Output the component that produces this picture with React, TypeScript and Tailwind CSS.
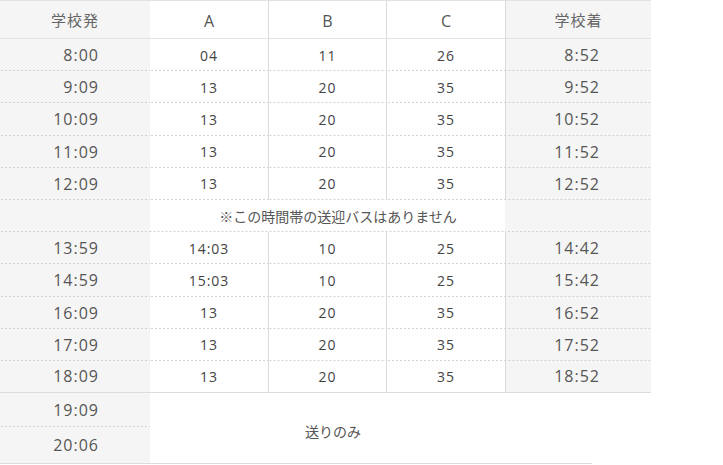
import React from "react";

const font = { fontFamily: '"Open Sans", "Noto Sans CJK JP", sans-serif' };

type Row = { dep: string; a: string; b: string; c: string; arr: string };

const first: Row[] = [
  { dep: "8:00", a: "04", b: "11", c: "26", arr: "8:52" },
  { dep: "9:09", a: "13", b: "20", c: "35", arr: "9:52" },
  { dep: "10:09", a: "13", b: "20", c: "35", arr: "10:52" },
  { dep: "11:09", a: "13", b: "20", c: "35", arr: "11:52" },
  { dep: "12:09", a: "13", b: "20", c: "35", arr: "12:52" },
];

const second: Row[] = [
  { dep: "13:59", a: "14:03", b: "10", c: "25", arr: "14:42" },
  { dep: "14:59", a: "15:03", b: "10", c: "25", arr: "15:42" },
  { dep: "16:09", a: "13", b: "20", c: "35", arr: "16:52" },
  { dep: "17:09", a: "13", b: "20", c: "35", arr: "17:52" },
  { dep: "18:09", a: "13", b: "20", c: "35", arr: "18:52" },
];

const dash =
  "bg-[linear-gradient(to_right,#d2d2d2_50%,transparent_50%)] bg-[length:4px_1px] bg-repeat-x bg-bottom";

function DataRow({ r, last }: { r: Row; last?: boolean }) {
  const bb = last ? "border-b border-solid border-b-[#dcdcdc]" : dash;
  return (
    <div className="grid grid-cols-[150px_118px_118px_119px_146px] h-[32.2px]">
      <div className={`bg-[#f5f5f5] flex items-center justify-end pr-[51px] text-[16px] tracking-[1px] text-[#555] ${bb}`}>{r.dep}</div>
      <div className={`flex items-center justify-center text-[14px] tracking-[1px] text-[#444] ${bb}`}>{r.a}</div>
      <div className={`flex items-center justify-center text-[14px] tracking-[1px] text-[#444] border-l border-l-[#dadada] ${bb}`}>{r.b}</div>
      <div className={`flex items-center justify-center text-[14px] tracking-[1px] text-[#444] border-l border-l-[#dadada] ${bb}`}>{r.c}</div>
      <div className={`bg-[#f5f5f5] flex items-center justify-end pr-[51px] text-[16px] tracking-[1px] text-[#555] border-l border-l-[#dadada] ${bb}`}>{r.arr}</div>
    </div>
  );
}

export default function App() {
  return (
    <div className="w-[723px] h-[465px] bg-white overflow-hidden" style={font}>
      <div className="w-[651px]">
        {/* header */}
        <div className="grid grid-cols-[150px_118px_118px_119px_146px] h-[39px] border-t border-b border-[#e2e2e2]">
          <div className="bg-[#f5f5f5] flex items-center justify-center pt-[2px] text-[15px] tracking-[1px] text-[#666]">学校発</div>
          <div className="flex items-center justify-center pt-[2px] text-[16px] text-[#555]">A</div>
          <div className="flex items-center justify-center pt-[2px] text-[16px] text-[#555] border-l border-l-[#dadada]">B</div>
          <div className="flex items-center justify-center pt-[2px] text-[16px] text-[#555] border-l border-l-[#dadada]">C</div>
          <div className="bg-[#f5f5f5] flex items-center justify-center pt-[2px] text-[15px] tracking-[1px] text-[#666] border-l border-l-[#dadada]">学校着</div>
        </div>
        {first.map((r) => (
          <DataRow key={r.dep} r={r} />
        ))}
        {/* notice */}
        <div className="grid grid-cols-[150px_355px_146px] h-[32.2px]">
          <div className={`bg-[#f5f5f5] ${dash}`} />
          <div className={`flex items-center justify-center pl-[21px] text-[14px] text-[#555] ${dash}`}>
            ※この時間帯の送迎バスはありません
          </div>
          <div className={`bg-[#f5f5f5] ${dash}`} />
        </div>
        {second.map((r, i) => (
          <DataRow key={r.dep} r={r} last={i === second.length - 1} />
        ))}
        {/* bottom */}
        <div className="grid grid-cols-[150px_442px] grid-rows-[33.5px_36px] w-[592px] border-b border-[#dcdcdc]">
          <div className={`bg-[#f5f5f5] flex items-center justify-end pr-[51px] text-[16px] tracking-[1px] text-[#555] ${dash}`}>19:09</div>
          <div className="row-span-2 flex items-center pl-[155px] pt-[8px] text-[14px] text-[#555]">送りのみ</div>
          <div className="bg-[#f5f5f5] flex items-center justify-end pr-[51px] text-[16px] tracking-[1px] text-[#555]">20:06</div>
        </div>
      </div>
    </div>
  );
}
